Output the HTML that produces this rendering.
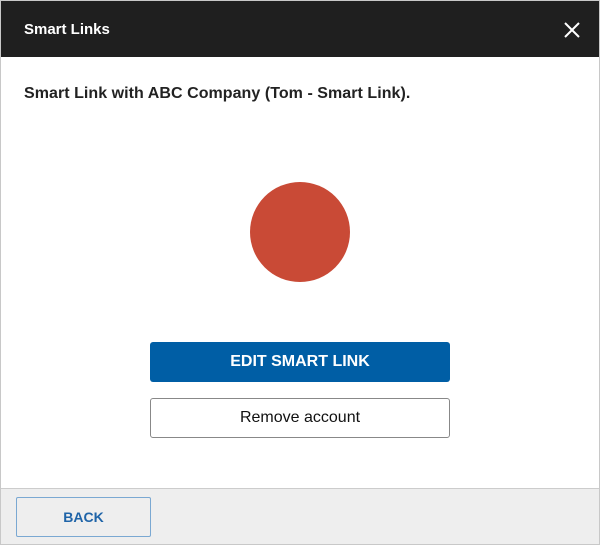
<!DOCTYPE html>
<html><head><style>
*{margin:0;padding:0;box-sizing:border-box}
body{width:600px;height:545px;font-family:"Liberation Sans",sans-serif;background:#fff;position:relative;overflow:hidden}
.frame{position:absolute;left:0;top:0;width:600px;height:545px;border:1px solid #c8c8c8}
.hdr{position:absolute;left:1px;top:1px;width:598px;height:56px;background:#1f1f1f;color:#fff}
.hdr .t{position:absolute;left:23px;top:20px;font-size:15px;font-weight:bold}
.x{position:absolute;left:563px;top:21px}
.msg{position:absolute;left:24px;top:85px;font-size:16px;font-weight:bold;color:#222;letter-spacing:0.05px}
.dot{position:absolute;left:250px;top:182px;width:100px;height:100px;border-radius:50%;background:#c94a36}
.b1{position:absolute;left:150px;top:342px;width:300px;height:40px;background:#005ea5;border-radius:3px;color:#fff;font-size:16px;font-weight:bold;text-align:center;line-height:40px}
.b2{position:absolute;left:150px;top:398px;width:300px;height:40px;border:1px solid #888;border-radius:3px;color:#111;font-size:16px;text-align:center;line-height:38px}
.ft{position:absolute;left:1px;top:488px;width:598px;height:56px;background:#eee;border-top:1px solid #ccc}
.back{position:absolute;left:15px;top:8px;width:135px;height:40px;border:1px solid #7aa8d2;border-radius:2px;color:#1f64a8;font-size:14px;font-weight:bold;text-align:center;line-height:38px}
</style></head><body>
<div class="frame"></div>
<div class="hdr"><div class="t">Smart Links</div>
<svg class="x" width="16" height="16" viewBox="0 0 16 16"><path d="M1 1L15 15M15 1L1 15" stroke="#fff" stroke-width="2"/></svg></div>
<div class="msg">Smart Link with ABC Company (Tom - Smart Link).</div>
<div class="dot"></div>
<div class="b1">EDIT SMART LINK</div>
<div class="b2">Remove account</div>
<div class="ft"><div class="back">BACK</div></div>
</body></html>
